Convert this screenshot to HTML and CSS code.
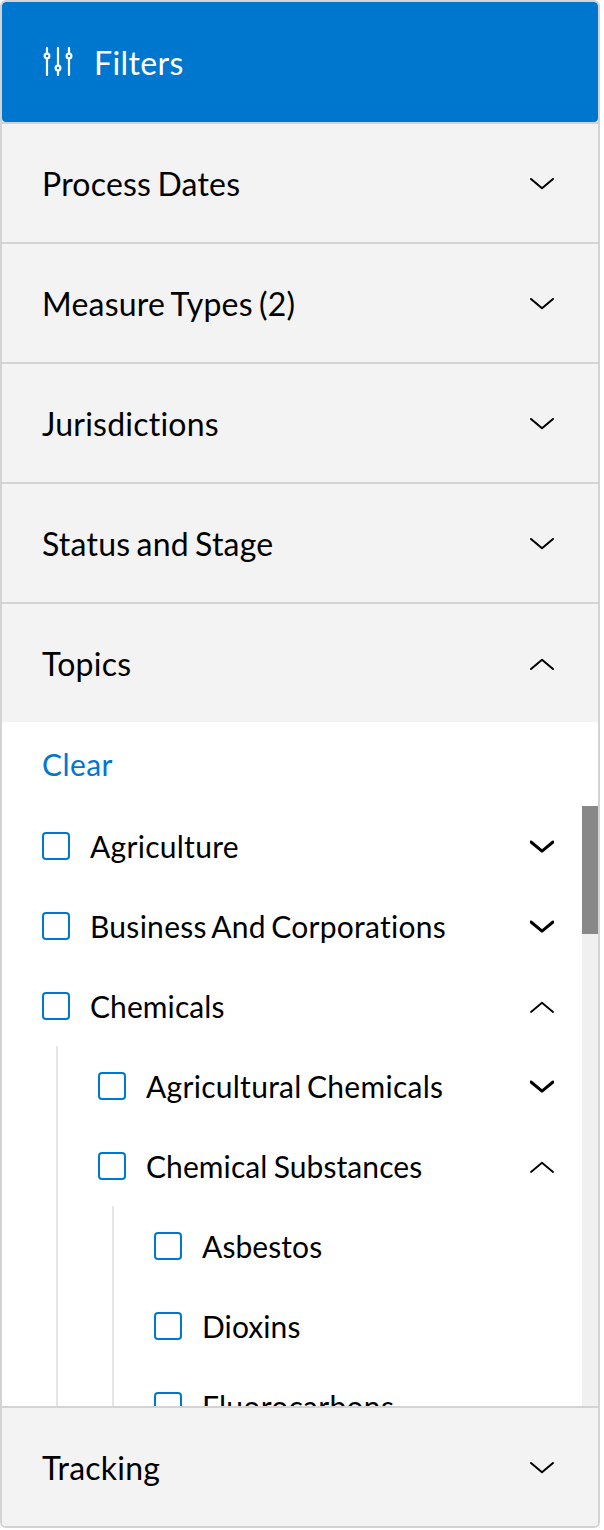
FILE: index.html
```html
<!DOCTYPE html>
<html lang="en">
<head>
  <meta charset="UTF-8">
  <title>Filters</title>
  <link rel="stylesheet" href="styles.css">
</head>
<body>

  <!-- Shared chevrons -->
  <svg class="symbols" width="0" height="0">
    <symbol id="down" viewBox="0 0 24 14"><path d="M1 2L12 11.2L23 2"/></symbol>
    <symbol id="up" viewBox="0 0 24 14"><path d="M1 12L12 2.8L23 12"/></symbol>
  </svg>

  <div class="panel">
    <div class="panel-header">
      <svg class="filter-icon" viewBox="0 0 30 30">
        <path d="M4 1V6M4 12V28M15 1V18M15 24V28M26 1V6M26 12V28"/>
        <circle cx="4" cy="9" r="2.4"/>
        <circle cx="15" cy="21" r="2.4"/>
        <circle cx="26" cy="9" r="2.4"/>
      </svg>
      <span>Filters</span>
    </div>

    <div class="section"><span>Process Dates</span><svg class="chevron"><use href="#down"/></svg></div>
    <div class="section"><span>Measure Types (2)</span><svg class="chevron"><use href="#down"/></svg></div>
    <div class="section"><span>Jurisdictions</span><svg class="chevron"><use href="#down"/></svg></div>
    <div class="section"><span>Status and Stage</span><svg class="chevron"><use href="#down"/></svg></div>
    <div class="section"><span>Topics</span><svg class="chevron"><use href="#up"/></svg></div>

    <!-- Topics -->
    <div class="topics">
      <a class="clear">Clear</a>
      <div class="scroll-area">
        <ul class="tree">
          <li><div class="row"><span class="checkbox"></span><span class="wide">Agriculture</span><svg class="chevron bold"><use href="#down"/></svg></div></li>
          <li><div class="row"><span class="checkbox"></span><span class="wide">Business And Corporations</span><svg class="chevron bold"><use href="#down"/></svg></div></li>
          <li>
            <div class="row"><span class="checkbox"></span><span>Chemicals</span><svg class="chevron thin"><use href="#up"/></svg></div>
            <ul class="children">
              <li><div class="row"><span class="checkbox"></span><span class="wide">Agricultural Chemicals</span><svg class="chevron bold"><use href="#down"/></svg></div></li>
              <li>
                <div class="row"><span class="checkbox"></span><span>Chemical Substances</span><svg class="chevron thin"><use href="#up"/></svg></div>
                <ul class="children">
                  <li><div class="row"><span class="checkbox"></span><span>Asbestos</span></div></li>
                  <li><div class="row"><span class="checkbox"></span><span>Dioxins</span></div></li>
                  <li><div class="row"><span class="checkbox"></span><span class="wide">Fluorocarbons</span></div></li>
                </ul>
              </li>
            </ul>
          </li>
        </ul>
        <div class="scrollbar"><div class="thumb"></div></div>
      </div>
    </div>

    <div class="section"><span>Tracking</span><svg class="chevron"><use href="#down"/></svg></div>
  </div>

</body>
</html>
```

FILE: styles.css
```css
* {
  box-sizing: border-box;
}
body {
  margin: 0;
  background: #fff;
  color: #000;
  font-family: Lato, sans-serif;
  font-variant-ligatures: none;
}
ul {
  list-style: none;
  margin: 0;
  padding: 0;
}
.symbols {
  display: block;
}
.panel {
  width: 600px;
  border: 2px solid #d3d3d3;
  border-radius: 6px;
  overflow: hidden;
}

/* Header */
.panel-header {
  display: flex;
  align-items: center;
  gap: 21px;
  height: 120px;
  padding: 0 40px 0 41px;
  background: #0077cf;
  border-radius: 4px;
  color: #fff;
  font-size: 32px;
  letter-spacing: 0.4px;
}
.filter-icon {
  width: 30px;
  height: 30px;
  fill: none;
  stroke: #fff;
  stroke-width: 2.2;
  stroke-linecap: round;
}

/* Accordion rows */
.section {
  display: flex;
  align-items: center;
  justify-content: space-between;
  height: 120px;
  padding: 0 44px 0 40px;
  background: #f3f3f3;
  border-top: 2px solid #d3d3d3;
  font-size: 32px;
  letter-spacing: 0.22px;
  word-spacing: -2.2px;
}
.chevron {
  width: 24px;
  height: 14px;
  margin-top: 2px;
  fill: none;
  stroke: #000;
  stroke-width: 2;
  stroke-linecap: round;
  stroke-linejoin: round;
}

/* Topics tree */
.topics {
  height: 684px;
}
.clear {
  display: block;
  height: 84px;
  padding-left: 40px;
  color: #0077cf;
  font-size: 30px;
  line-height: 85px;
  letter-spacing: 0.4px;
}
.scroll-area {
  display: flex;
  height: 600px;
  overflow: hidden;
}
.tree {
  flex: 1;
  padding-left: 40px;
}
.row {
  display: flex;
  align-items: center;
  height: 80px;
  padding-right: 28px;
  font-size: 30px;
  letter-spacing: 0.08px;
  word-spacing: -1.5px;
}
.checkbox {
  width: 28px;
  height: 28px;
  margin-right: 20px;
  border: 2px solid #0077cf;
  border-radius: 4px;
}
.wide {
  letter-spacing: 0.28px;
  word-spacing: -2.6px;
}
.row .chevron {
  margin-left: auto;
}
.row .chevron.bold {
  stroke-width: 3;
}
.row .chevron.thin {
  stroke-width: 1.8;
}
.children {
  margin-left: 14px;
  padding-left: 40px;
  border-left: 2px solid #e6e6e6;
}
.scrollbar {
  width: 16px;
  background: #f0f0f0;
}
.thumb {
  height: 128px;
  background: #888;
}
```
